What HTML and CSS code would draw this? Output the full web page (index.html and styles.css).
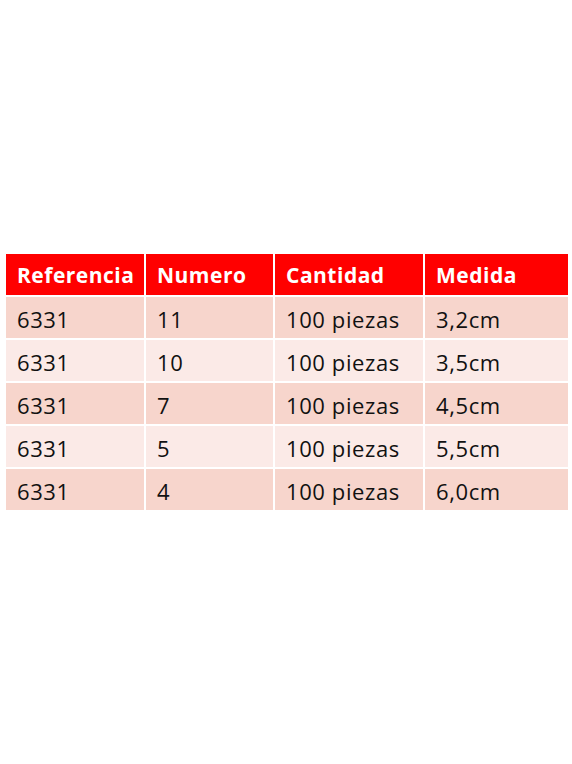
FILE: index.html
```html
<!DOCTYPE html>
<html lang="es">
<head>
<meta charset="utf-8">
<title>Tabla de medidas</title>
<link rel="stylesheet" href="styles.css">
</head>
<body>
<div class="page">
  <div class="table">
    <div class="cell head">Referencia</div>
    <div class="cell head">Numero</div>
    <div class="cell head">Cantidad</div>
    <div class="cell head">Medida</div>

    <div class="cell odd">6331</div>
    <div class="cell odd">11</div>
    <div class="cell odd">100 piezas</div>
    <div class="cell odd">3,2cm</div>

    <div class="cell even">6331</div>
    <div class="cell even">10</div>
    <div class="cell even">100 piezas</div>
    <div class="cell even">3,5cm</div>

    <div class="cell odd">6331</div>
    <div class="cell odd">7</div>
    <div class="cell odd">100 piezas</div>
    <div class="cell odd">4,5cm</div>

    <div class="cell even">6331</div>
    <div class="cell even">5</div>
    <div class="cell even">100 piezas</div>
    <div class="cell even">5,5cm</div>

    <div class="cell odd">6331</div>
    <div class="cell odd">4</div>
    <div class="cell odd">100 piezas</div>
    <div class="cell odd">6,0cm</div>
  </div>
</div>
</body>
</html>
```

FILE: styles.css
```css
html, body {
  margin: 0;
  padding: 0;
  background: #ffffff;
}

.page {
  padding: 254px 0 0 6px;
  font-family: "Open Sans", Lato, "Liberation Sans", sans-serif;
}

.table {
  display: grid;
  grid-template-columns: 138px 127px 148px 143px;
  grid-auto-rows: 41px;
  gap: 2px;
  width: 562px;
}

.cell {
  display: flex;
  align-items: center;
  padding: 2px 0 0 11px;
  font-size: 22px;
  letter-spacing: 0.6px;
  color: #111111;
  box-sizing: border-box;
}

.head {
  background: #ff0000;
  color: #ffffff;
  font-weight: 700;
  font-size: 21px;
  letter-spacing: 0.5px;
  padding-top: 0;
}

.odd {
  background: #f7d5cc;
}

.even {
  background: #fbeae7;
}
```
